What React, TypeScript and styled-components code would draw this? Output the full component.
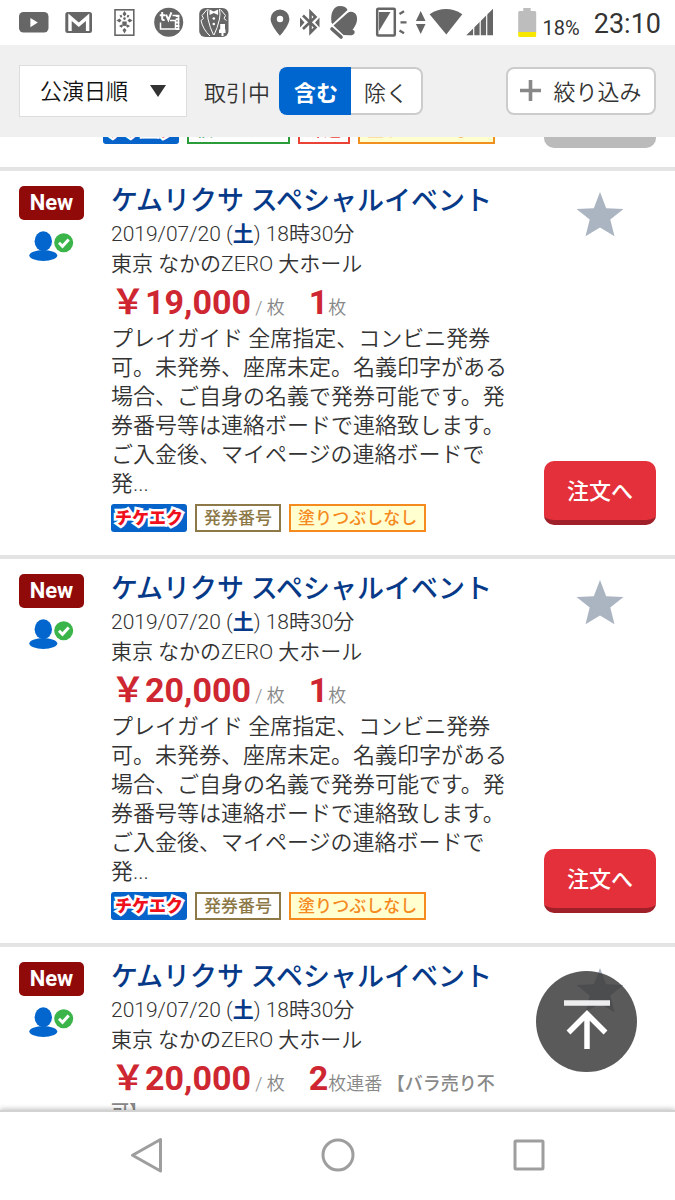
import React from "react";
import styled, { createGlobalStyle } from "styled-components";

const GlobalStyle = createGlobalStyle`
  *, *::before, *::after { box-sizing: border-box; }
  body {
    margin: 0;
    background: #fff;
    color: #333;
    font-family: Roboto, "Noto Sans CJK JP", sans-serif;
    font-weight: 350;
  }
  button, input, select { font: inherit; color: inherit; }
  h2, p { margin: 0; }
  svg { display: block; flex: none; }
`;

const Screen = styled.div`
  display: flex;
  flex-direction: column;
  height: 100vh;
  overflow: hidden;
`;

/* ---------- status bar ---------- */

const StatusBar = styled.header`
  display: flex;
  justify-content: space-between;
  height: 45px;
  flex: none;
  padding: 0 14px 0 12px;
  color: #666;
  font-weight: 400;
`;

const StatusGroup = styled.div`
  display: flex;
  align-items: flex-start;
`;

const BatteryLevel = styled.span`
  margin-right: 14px;
  font-size: 20px;
  line-height: 56px;
  color: #333;
`;

const Clock = styled.time`
  font-size: 27px;
  line-height: 48px;
  color: #333;
`;

/* Every status icon is drawn on one shared 45px-high strip; each shows its own slice. */
function StatusIcon({ from, to, children }: { from: number; to: number; children: React.ReactNode }) {
  return (
    <svg width={to - from} height={45} viewBox={`${from} 0 ${to - from} 45`} fill="currentColor" aria-hidden="true">
      {children}
    </svg>
  );
}

function NotificationIcons() {
  return (
    <StatusGroup>
      <StatusIcon from={12} to={56}>
        <rect x="19" y="12" width="29.5" height="20.5" rx="4.5" />
        <path d="M30.4 18v9.2l7.4-4.6z" fill="#fff" />
      </StatusIcon>
      <StatusIcon from={56} to={103}>
        <rect x="65.3" y="12" width="26.7" height="21" rx="2.5" />
        <path d="M70 31V17.2l8.800 7.600 8.800-7.600V31" fill="none" stroke="#fff" strokeWidth="3.4" />
      </StatusIcon>
      <StatusIcon from={103} to={144}>
        <rect x="115" y="9.8" width="18.8" height="25.4" fill="none" stroke="currentColor" strokeWidth="1.6" />
        <path d="M124.5 11l2 3-2 2.500-2-2.500zM124.500 33.500l2-3.500-2-2-2 2zM116.500 20.500l3-2 2 2-2 2zM132.500 20.500l-3-2-2 2 2 2zM119 26l2.500-1.500 1.500 1.500-1.500 1.800zM130 26l-2.500-1.500-1.500 1.500 1.500 1.800zM119.500 15.500l2-.8.8 2.200-1.500.8zM129.500 15.500l-2-.8-.8 2.200 1.500.8z" />
        <rect x="122.300" y="21.500" width="4.400" height="4.400" />
        <circle cx="124.500" cy="18.600" r="1.300" />
      </StatusIcon>
      <StatusIcon from={144} to={191}>
        <circle cx="168.700" cy="22.300" r="14.500" />
        <path d="M159.800 15.200h5.400M162.200 12v6.800q0 1.600 2.400 1.200M166 14.700l2.400 5.200 3-7.500" fill="none" stroke="#fff" strokeWidth="2" />
        <path d="M160.500 22.500v6.500h17.700M170 20.500h5.500v8.500M172.500 15.500h6v14.500" fill="none" stroke="#fff" strokeWidth="1.500" />
        <path d="M177.500 15v15" stroke="#fff" strokeWidth="3.600" strokeDasharray="2 1.300" />
      </StatusIcon>
      <StatusIcon from={191} to={239}>
        <rect x="199.200" y="8" width="29.300" height="29" rx="6" />
        <path d="M209.500 9.500l4.300 2 4.300-2v5.600l-4.300-2-4.300 2z" fill="#fff" />
        <circle cx="213.800" cy="18.500" r="1.300" fill="#fff" />
        <circle cx="213.800" cy="24" r="1.300" fill="#fff" />
        <path d="M208 9q-1 5 0 10 2 9 5.500 16M219.500 9q1 5 0 10-2 9-5.500 16M207 9.500l-5 6 1.500 3-2.500 2q2 9 9 15.500M220.500 9.500l5 6-1.500 3 2.500 2" fill="none" stroke="#fff" strokeWidth="1" />
        <path d="M220.200 24h4.800v7.500h-4.800zM219 29.500h6.500v3.500H219zM221.500 33h2v3h-2z" fill="#fff" />
      </StatusIcon>
    </StatusGroup>
  );
}

function SystemIcons() {
  return (
    <StatusGroup>
      <StatusIcon from={264} to={295}>
        <path fillRule="evenodd" d="M281 9.600a9.400 9.400 0 0 0-9.400 9.400c0 6.500 9.400 16.800 9.400 16.800s9.400-10.300 9.400-16.800A9.400 9.400 0 0 0 281 9.600zm0 6.200a3.200 3.200 0 1 1 0 6.400 3.200 3.200 0 0 1 0-6.400z" />
      </StatusIcon>
      <StatusIcon from={295} to={326}>
        <path d="M304 15.500l12.500 12-5 5V12l5 5L304 29" fill="none" stroke="currentColor" strokeWidth="2.600" />
        <path d="M301 17.500l4.500 5-4.500 5zM320.500 17.500l-4.500 5 4.500 5z" />
      </StatusIcon>
      <StatusIcon from={326} to={366}>
        <path d="M332.500 22.500c-1.500-9 2-16.500 8.500-16.500 4 0 6.500 1.500 7.500 4L333.500 24z" />
        <path d="M334.500 25.500L348.500 13c3-2.300 7.500-1 9 2.500 1.500 4.500 0 9-4 14.500 2 0 2.500 1.500 2 3s-2.500 2.500-5 2.300l-6-.3z" />
        <path d="M333 29l9 8" stroke="currentColor" strokeWidth="3.600" strokeLinecap="round" />
      </StatusIcon>
      <StatusIcon from={366} to={412}>
        <rect x="378.200" y="8.800" width="17.600" height="26.600" rx="1" fill="none" stroke="currentColor" strokeWidth="2.500" />
        <path d="M380 12h11.500L380 31z" />
        <path d="M400.500 14l4.500-2.800M401.500 22.300h6M400.500 30.500l4.500 2.800" stroke="currentColor" strokeWidth="2.300" />
      </StatusIcon>
      <StatusIcon from={412} to={429}>
        <path d="M421.700 11l4.800 10h-9.600zM421.700 34l4.800-10h-9.600z" />
      </StatusIcon>
      <StatusIcon from={429} to={465}>
        <path d="M430.600 14.200Q447 4 463.300 14.200L447.300 34.600z" />
      </StatusIcon>
      <StatusIcon from={465} to={506}>
        <path d="M467.300 35.300L494 8.700v26.600z" />
        <path d="M474.700 20v16M481.200 16v20M487.700 10v26" stroke="#fff" strokeWidth="1.200" />
      </StatusIcon>
      <StatusIcon from={506} to={544}>
        <path d="M524.300 8h7.400v3h4a1.500 1.500 0 0 1 1.500 1.500V32h-18V12.500a1.500 1.500 0 0 1 1.500-1.500h3.600z" fill="#bdbdbd" />
        <path d="M519.200 32h18v3.500a1.500 1.500 0 0 1-1.500 1.500h-15a1.500 1.500 0 0 1-1.500-1.500z" fill="#f7e600" />
      </StatusIcon>
      <BatteryLevel>18%</BatteryLevel>
      <Clock>23:10</Clock>
    </StatusGroup>
  );
}

/* ---------- toolbar ---------- */

const Toolbar = styled.form`
  display: flex;
  align-items: center;
  height: 92px;
  flex: none;
  padding: 0 19px;
  background: #f0f0f0;
  font-size: 22px;
`;

const SortField = styled.div`
  position: relative;
  flex: none;
`;

const SortSelect = styled.select`
  display: block;
  width: 168px;
  height: 52px;
  padding: 0 0 0 20px;
  border: 1px solid #ddd;
  border-radius: 0;
  background: #fff;
  color: #111;
  appearance: none;
`;

const SortArrow = styled.svg`
  position: absolute;
  right: 21px;
  top: 20px;
  pointer-events: none;
`;

const ToggleSet = styled.fieldset`
  display: flex;
  align-items: center;
  margin: 0 0 0 17px;
  padding: 0;
  border: 0;
  min-width: 0;
`;

const ToggleCaption = styled.span`
  margin-right: 9px;
  white-space: nowrap;
`;

const ToggleOption = styled.label`
  display: flex;
  align-items: center;
  justify-content: center;
  width: 72px;
  height: 48px;
  border: 2px solid #ccc;
  background: #fff;
  cursor: pointer;
  white-space: nowrap;

  &:first-of-type { border-radius: 8px 0 0 8px; border-right: 0; }
  &:last-of-type { border-radius: 0 8px 8px 0; border-left: 0; }
  &:has(input:checked) {
    border-color: #0066cf;
    background: #0066cf;
    color: #fff;
    font-weight: 700;
  }
`;

const HiddenRadio = styled.input`
  position: absolute;
  opacity: 0;
  width: 1px;
  height: 1px;
  margin: 0;
`;

const FilterButton = styled.button`
  display: flex;
  align-items: center;
  justify-content: center;
  gap: 12px;
  width: 150px;
  height: 48px;
  margin-left: auto;
  padding: 0 0 2px;
  border: 2px solid #ccc;
  border-radius: 8px;
  background: #fff;
  white-space: nowrap;
`;

/* ---------- list ---------- */

const Listings = styled.main`
  flex: 1;
  min-height: 0;
  overflow-y: auto;
  scrollbar-width: none;
`;

const PartialRow = styled.div`
  display: flex;
  align-items: flex-end;
  justify-content: space-between;
  height: 30px;
  padding: 0 19px 0 103px;
  overflow: hidden;
`;

const Row = styled.article`
  display: grid;
  grid-template-columns: 111px minmax(0, 1fr) 112px;
  padding-right: 19px;
  border-top: 4px solid #e4e4e4;
`;

const Marks = styled.div`
  display: flex;
  flex-direction: column;
  align-items: flex-start;
  gap: 10px;
  padding: 15px 0 0 19px;
`;

const NewBadge = styled.span`
  width: 65px;
  height: 34px;
  border-radius: 5px;
  background: #910a0a;
  color: #fff;
  font-size: 22px;
  font-weight: 700;
  line-height: 34px;
  text-align: center;
`;

const Details = styled.div`
  max-width: 400px;
  padding: 13px 0 23px;
`;

const Title = styled.h2`
  font-size: 27px;
  font-weight: 500;
  line-height: 35px;
  white-space: nowrap;

  a { color: #063a88; text-decoration: none; }
`;

const Meta = styled.p`
  font-size: 21px;
  line-height: 30px;
`;

const Saturday = styled.b`
  color: #063a88;
  font-weight: 700;
`;

const PriceLine = styled.p`
  padding-top: 3px;
  color: #888;
  font-size: 18px;
  line-height: 28px;
`;

const Note = styled.b`
  font-weight: 500;
`;

const Amount = styled.strong<{ $spaced?: boolean }>`
  margin-left: ${(p) => (p.$spaced ? "24px" : "0")};
  color: #ce2731;
  font-size: 34px;
  font-weight: 700;
  line-height: 40px;
`;

const Description = styled.p`
  padding-top: 2px;
  font-size: 22px;
  line-height: 29px;
`;

const Tags = styled.div<{ $offset: number; $bottom: number }>`
  display: flex;
  flex: none;
  gap: 8px;
  margin: ${(p) => `${p.$offset}px 0 ${p.$bottom}px`};
`;

const Tag = styled.span<{ $color: string; $fill?: string }>`
  height: 28px;
  padding: 0 7px;
  border: 2px solid ${(p) => p.$color};
  background: ${(p) => p.$fill ?? "#fff"};
  color: ${(p) => p.$color};
  font-size: 17px;
  font-weight: 500;
  line-height: 25px;
  white-space: nowrap;
`;

const BrandTag = styled.span`
  width: 76px;
  height: 28px;
  border-radius: 3px;
  background: #0663ca;
  color: #f0101c;
  font-size: 17px;
  font-weight: 900;
  line-height: 28px;
  text-align: center;
  white-space: nowrap;
  -webkit-text-stroke: 5px #fff;
  paint-order: stroke fill;
`;

const Actions = styled.div`
  display: flex;
  flex-direction: column;
  align-items: center;
  justify-content: space-between;
  padding: 20px 0 30px;
`;

const StarButton = styled.button`
  padding: 0;
  border: 0;
  background: none;
`;

const OrderButton = styled.button`
  width: 112px;
  height: 64px;
  padding: 0 0 3px;
  border: 0;
  border-bottom: 5px solid #a0202a;
  border-radius: 10px;
  background: #e4303a;
  color: #fff;
  font-size: 22px;
  font-weight: 500;
`;

const SoldButton = styled.button`
  flex: none;
  width: 112px;
  height: 64px;
  margin-bottom: 19px;
  border: 0;
  border-radius: 10px;
  background: #bbb;
`;

const TopButton = styled.button`
  position: fixed;
  right: 38px;
  bottom: 128px;
  width: 101px;
  height: 101px;
  padding: 0;
  border: 0;
  border-radius: 50%;
  background: rgba(54, 54, 54, 0.82);
`;

/* ---------- navigation bar ---------- */

const NavBar = styled.nav`
  position: relative;
  display: flex;
  justify-content: center;
  gap: 143px;
  height: 90px;
  flex: none;
  padding-top: 19px;
  border-top: 2px solid #d2d2d2;
  background: #fff;
  box-shadow: 0 -1px 5px rgba(0, 0, 0, 0.25);
`;

const NavButton = styled.button`
  width: 48px;
  height: 48px;
  padding: 0;
  border: 0;
  background: none;
  color: #9e9e9e;
`;

type Listing = {
  id: number;
  price: string;
  count: string;
  unit: string;
  note?: string;
  description?: string;
};

const description =
  "プレイガイド 全席指定、コンビニ発券可。未発券、座席未定。名義印字がある場合、ご自身の名義で発券可能です。発券番号等は連絡ボードで連絡致します。ご入金後、マイページの連絡ボードで";

const listings: Listing[] = [
  { id: 1, price: "19,000", count: "1", unit: "枚", description },
  { id: 2, price: "20,000", count: "1", unit: "枚", description },
  { id: 3, price: "20,000", count: "2", unit: "枚連番", note: "【バラ売り不可】" },
];

function VerifiedSeller() {
  return (
    <svg width="66" height="32" viewBox="19 229 66 32" role="img" aria-label="本人確認済み">
      <ellipse cx="43.300" cy="254.500" rx="14" ry="5.400" fill="#0366ce" />
      <ellipse cx="43.300" cy="240.300" rx="8.700" ry="10" fill="#0366ce" />
      <circle cx="63.700" cy="241.700" r="9.500" fill="#3bb54a" />
      <path d="M59 241.800l3.500 3.500 6.200-6.800" fill="none" stroke="#fff" strokeWidth="3" />
    </svg>
  );
}

function ListingRow({ item }: { item: Listing }) {
  return (
    <Row>
      <Marks>
        <NewBadge>New</NewBadge>
        <VerifiedSeller />
      </Marks>
      <Details>
        <Title>
          <a href="#listing">ケムリクサ スペシャルイベント</a>
        </Title>
        <Meta>
          2019/07/20 (<Saturday>土</Saturday>) 18時30分
        </Meta>
        <Meta>東京 なかのZERO 大ホール</Meta>
        <PriceLine>
          <Amount>￥{item.price}</Amount> / 枚<Amount $spaced>{item.count}</Amount>
          {item.unit}
          {item.note && <Note> {item.note}</Note>}
        </PriceLine>
        {item.description && (
          <>
            <Description>
              {item.description}
              <br />
              発...
            </Description>
            <Tags $offset={6} $bottom={0}>
              <BrandTag>チケエク</BrandTag>
              <Tag $color="#8d7848">発券番号</Tag>
              <Tag $color="#f58a1f" $fill="#ffffd0">塗りつぶしなし</Tag>
            </Tags>
          </>
        )}
      </Details>
      <Actions>
        <StarButton type="button" aria-label="お気に入り">
          <svg width="48" height="46" viewBox="0 0 48 46">
            <path d="M24 1l6.200 16.200L47.500 18 34.300 28.500 38.500 45.200 24 36.500 9.500 45.200l4.200-16.700L.5 18l17.300-.8z" fill="#abb4c1" />
          </svg>
        </StarButton>
        {item.description && <OrderButton type="button">注文へ</OrderButton>}
      </Actions>
    </Row>
  );
}

export default function App() {
  return (
    <Screen>
      <GlobalStyle />
      <StatusBar>
        <NotificationIcons />
        <SystemIcons />
      </StatusBar>
      <Toolbar>
        <SortField>
          <SortSelect aria-label="並び順" defaultValue="date">
            <option value="date">公演日順</option>
          </SortSelect>
          <SortArrow width="16" height="12" viewBox="0 0 16 12" aria-hidden="true">
            <path d="M0 0h16L8 12z" fill="#333" />
          </SortArrow>
        </SortField>
        <ToggleSet aria-label="取引中">
          <ToggleCaption>取引中</ToggleCaption>
          <ToggleOption>
            <HiddenRadio type="radio" name="trading" defaultChecked />
            含む
          </ToggleOption>
          <ToggleOption>
            <HiddenRadio type="radio" name="trading" />
            除く
          </ToggleOption>
        </ToggleSet>
        <FilterButton type="button">
          <svg width="21" height="21" viewBox="0 0 21 21" aria-hidden="true">
            <path d="M10.500 0v21M0 10.500h21" stroke="#888" strokeWidth="3.600" />
          </svg>
          絞り込み
        </FilterButton>
      </Toolbar>
      <Listings>
        <PartialRow>
          <Tags $offset={0} $bottom={23}>
            <BrandTag>チケエク</BrandTag>
            <Tag $color="#2a9d3a">横アリナシ</Tag>
            <Tag $color="#ea4335">郵送</Tag>
            <Tag $color="#f0901f" $fill="#ffffd0">塗りつぶしなし</Tag>
          </Tags>
          <SoldButton type="button" disabled aria-label="取引中" />
        </PartialRow>
        {listings.map((item) => (
          <ListingRow key={item.id} item={item} />
        ))}
      </Listings>
      <TopButton type="button" aria-label="ページの先頭へ">
        <svg width="101" height="101" viewBox="0 0 101 101">
          <path d="M28 32h46" stroke="#fff" strokeOpacity="0.9" strokeWidth="5.500" />
          <path d="M51 78V42M32.500 61.500L51 43l18.500 18.500" fill="none" stroke="#fff" strokeWidth="5.500" />
        </svg>
      </TopButton>
      <NavBar>
        <NavButton type="button" aria-label="戻る">
          <svg width="48" height="48" viewBox="0 0 48 48">
            <path d="M37.500 8.500v31.500L9.500 24.300z" fill="none" stroke="currentColor" strokeWidth="3" strokeLinejoin="round" />
          </svg>
        </NavButton>
        <NavButton type="button" aria-label="ホーム">
          <svg width="48" height="48" viewBox="0 0 48 48">
            <circle cx="24" cy="24" r="15" fill="none" stroke="currentColor" strokeWidth="3" />
          </svg>
        </NavButton>
        <NavButton type="button" aria-label="最近使ったアプリ">
          <svg width="48" height="48" viewBox="0 0 48 48">
            <rect x="10" y="10" width="28" height="28" rx="1" fill="none" stroke="currentColor" strokeWidth="3" />
          </svg>
        </NavButton>
      </NavBar>
    </Screen>
  );
}
